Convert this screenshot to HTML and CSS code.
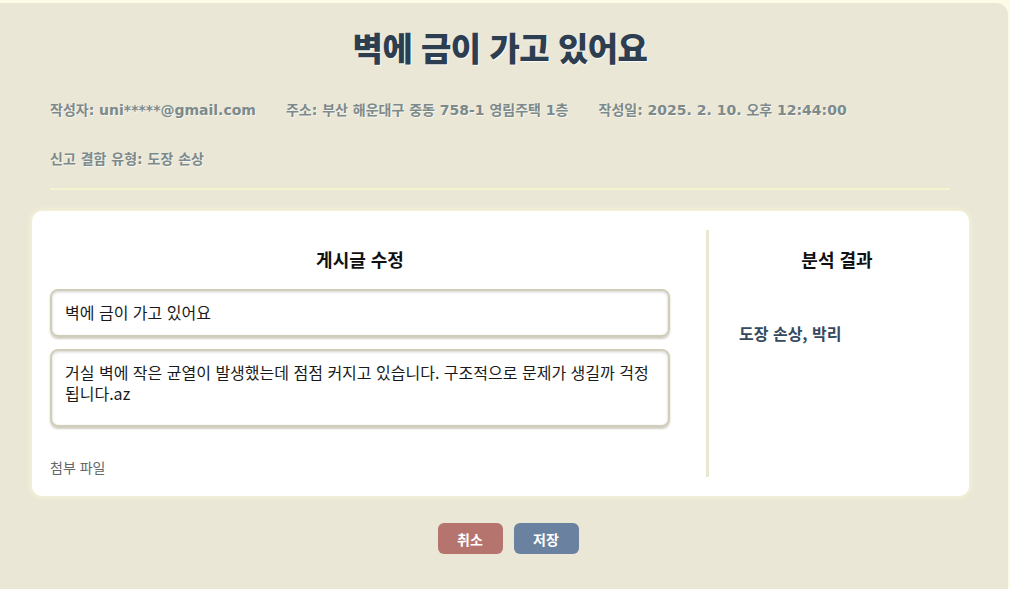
FILE: index.html
```html
<!DOCTYPE html>
<html lang="ko">
<head>
<meta charset="utf-8">
<link rel="stylesheet" href="styles.css">
</head>
<body>
<div class="page">
  <header class="post-head">
    <h1 class="post-title">벽에 금이 가고 있어요</h1>
    <div class="meta-row">
      <span>작성자: uni*****@gmail.com</span>
      <span>주소: 부산 해운대구 중동 758-1 영림주택 1층</span>
      <span>작성일: 2025. 2. 10. 오후 12:44:00</span>
    </div>
    <div class="meta-row second">
      <span>신고 결함 유형: 도장 손상</span>
    </div>
    <div class="head-rule"></div>
  </header>

  <section class="card">
    <div class="edit-col">
      <h2 class="col-title">게시글 수정</h2>
      <div class="field single">벽에 금이 가고 있어요</div>
      <div class="field multi">거실 벽에 작은 균열이 발생했는데 점점 커지고 있습니다. 구조적으로 문제가 생길까 걱정됩니다.az</div>
      <div class="attach">첨부 파일</div>
    </div>
    <div class="divider"></div>
    <div class="result-col">
      <h2 class="col-title">분석 결과</h2>
      <div class="result">도장 손상, 박리</div>
    </div>
  </section>

  <div class="actions">
    <button class="btn cancel">취소</button>
    <button class="btn save">저장</button>
  </div>
</div>
</body>
</html>
```

FILE: styles.css
```css
* { box-sizing: border-box; }
html, body { margin: 0; padding: 0; }
body {
  background: #fdfbe6;
  font-family: "Noto Sans CJK KR", "Noto Sans", sans-serif;
  width: 1010px;
  height: 589px;
  overflow: hidden;
}
.page {
  margin-top: 3px;
  width: 1008px;
  height: 600px;
  background: #eae7d6;
  border-radius: 0 12px 0 0;
}
.post-head {
  padding: 22px 58px 0 50px;
}
.post-title {
  margin: 0;
  text-align: center;
  font-size: 33px;
  font-weight: 900;
  line-height: 44px;
  color: #2c3e50;
  letter-spacing: -0.5px;
  text-shadow: 1px 1px 1px rgba(255,255,255,0.8);
}
.meta-row {
  margin-top: 31px;
  display: flex;
  gap: 30px;
  font-family: "DejaVu Sans", "Noto Sans CJK KR", sans-serif;
  font-size: 14px;
  font-weight: 700;
  line-height: 20px;
  color: #7d8a8b;
  text-shadow: 1px 1px 0 rgba(255,255,255,0.6);
}
.meta-row.second { margin-top: 29px; }
.head-rule {
  margin-top: 19px;
  height: 2px;
  background: #f6f3cf;
}
.card {
  margin: 21px 39px 0 32px;
  height: 285px;
  background: #fff;
  border-radius: 10px;
  box-shadow: 0 0 5px 1px #f8f5d6;
  padding: 19px 18px 19px 18px;
  display: flex;
}
.edit-col {
  width: 620px;
  display: flex;
  flex-direction: column;
}
.col-title {
  margin: 0;
  text-align: center;
  font-size: 18px;
  font-weight: 700;
  line-height: 24px;
  color: #111;
  padding-top: 17px;
}
.field {
  border: 2px solid #d0cdb8;
  border-radius: 8px;
  box-shadow: inset 0 1px 3px rgba(0,0,0,0.18), 0 2px 2px rgba(120,115,80,0.35);
  font-size: 16px;
  line-height: 21px;
  color: #1a1a1a;
  padding: 11px 13px;
}
.single {
  margin-top: 18px;
  height: 48px;
}
.multi {
  margin-top: 12px;
  height: 78px;
}
.attach {
  margin-top: 30px;
  font-size: 14px;
  color: #666;
  line-height: 20px;
}
.divider {
  margin-left: 36px;
  width: 3px;
  background: #e9e6d2;
}
.result-col {
  flex: 1;
  padding: 0 16px 0 30px;
}
.result {
  margin-top: 51px;
  font-size: 16px;
  font-weight: 700;
  color: #34495e;
  line-height: 22px;
}
.actions {
  margin-top: 27px;
  display: flex;
  justify-content: center;
  gap: 11px;
  padding-left: 8px;
}
.btn {
  width: 65px;
  height: 31px;
  border: none;
  border-radius: 6px;
  color: #fff;
  font-family: "Noto Sans CJK KR", "Noto Sans", sans-serif;
  font-size: 14px;
  font-weight: 700;
}
.cancel { background: #b5746e; }
.save { background: #6a82a0; }
```
